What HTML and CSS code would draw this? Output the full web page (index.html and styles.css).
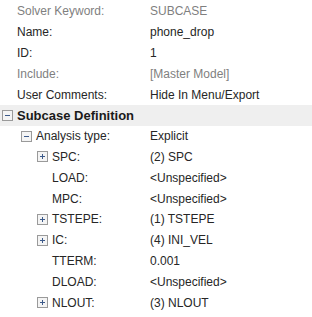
FILE: index.html
```html
<!DOCTYPE html>
<html lang="en">
<head>
  <meta charset="UTF-8">
  <title>Subcase Properties</title>
  <link rel="stylesheet" href="styles.css">
</head>
<body>
  <div class="prop-tree">
    <div class="row">
      <div class="label lvl-0 muted"><span class="toggle blank"></span>Solver Keyword:</div>
      <div class="value muted">SUBCASE</div>
    </div>
    <div class="row">
      <div class="label lvl-0"><span class="toggle blank"></span>Name:</div>
      <div class="value">phone_drop</div>
    </div>
    <div class="row">
      <div class="label lvl-0"><span class="toggle blank"></span>ID:</div>
      <div class="value">1</div>
    </div>
    <div class="row">
      <div class="label lvl-0 muted"><span class="toggle blank"></span>Include:</div>
      <div class="value muted">[Master Model]</div>
    </div>
    <div class="row">
      <div class="label lvl-0"><span class="toggle blank"></span>User Comments:</div>
      <div class="value">Hide In Menu/Export</div>
    </div>

    <div class="row group">
      <div class="label lvl-0 heading">
        <svg class="toggle" viewBox="0 0 11 11"><rect x="0.5" y="0.5" width="10" height="10" fill="#f4f4f4" stroke="#9a9a9a"/><path d="M3 5.5h5" stroke="#3c5a8a"/></svg>Subcase Definition
      </div>
    </div>
    <div class="row">
      <div class="label lvl-1">
        <svg class="toggle" viewBox="0 0 11 11"><rect x="0.5" y="0.5" width="10" height="10" fill="#f4f4f4" stroke="#9a9a9a"/><path d="M3 5.5h5" stroke="#3c5a8a"/></svg>Analysis type:
      </div>
      <div class="value">Explicit</div>
    </div>
    <div class="row">
      <div class="label lvl-2">
        <svg class="toggle" viewBox="0 0 11 11"><rect x="0.5" y="0.5" width="10" height="10" fill="#f4f4f4" stroke="#9a9a9a"/><path d="M3 5.5h5M5.5 3v5" stroke="#3c5a8a"/></svg>SPC:
      </div>
      <div class="value">(2) SPC</div>
    </div>
    <div class="row">
      <div class="label lvl-2"><span class="toggle blank"></span>LOAD:</div>
      <div class="value">&lt;Unspecified&gt;</div>
    </div>
    <div class="row">
      <div class="label lvl-2"><span class="toggle blank"></span>MPC:</div>
      <div class="value">&lt;Unspecified&gt;</div>
    </div>
    <div class="row">
      <div class="label lvl-2">
        <svg class="toggle" viewBox="0 0 11 11"><rect x="0.5" y="0.5" width="10" height="10" fill="#f4f4f4" stroke="#9a9a9a"/><path d="M3 5.5h5M5.5 3v5" stroke="#3c5a8a"/></svg>TSTEPE:
      </div>
      <div class="value">(1) TSTEPE</div>
    </div>
    <div class="row">
      <div class="label lvl-2">
        <svg class="toggle" viewBox="0 0 11 11"><rect x="0.5" y="0.5" width="10" height="10" fill="#f4f4f4" stroke="#9a9a9a"/><path d="M3 5.5h5M5.5 3v5" stroke="#3c5a8a"/></svg>IC:
      </div>
      <div class="value">(4) INI_VEL</div>
    </div>
    <div class="row">
      <div class="label lvl-2"><span class="toggle blank"></span>TTERM:</div>
      <div class="value">0.001</div>
    </div>
    <div class="row">
      <div class="label lvl-2"><span class="toggle blank"></span>DLOAD:</div>
      <div class="value">&lt;Unspecified&gt;</div>
    </div>
    <div class="row">
      <div class="label lvl-2">
        <svg class="toggle" viewBox="0 0 11 11"><rect x="0.5" y="0.5" width="10" height="10" fill="#f4f4f4" stroke="#9a9a9a"/><path d="M3 5.5h5M5.5 3v5" stroke="#3c5a8a"/></svg>NLOUT:
      </div>
      <div class="value">(3) NLOUT</div>
    </div>
  </div>
</body>
</html>
```

FILE: styles.css
```css
* {
  margin: 0;
  padding: 0;
  box-sizing: border-box;
}

body {
  background-color: #ffffff;
  color: #262626;
  font-family: 'Liberation Sans', Arial, sans-serif;
  font-size: 12px;
  overflow: hidden;
}

.prop-tree {
  display: flex;
  flex-direction: column;
  width: 312px;
  padding-top: 1px;
}

.row {
  display: flex;
  align-items: center;
  height: 20.8px;
  white-space: nowrap;
}

.row.group {
  background-color: #efefef;
}

.label {
  width: 150px;
  display: flex;
  align-items: center;
}

.lvl-0 {
  padding-left: 2px;
}

.lvl-1 {
  padding-left: 21px;
}

.lvl-2 {
  padding-left: 37px;
}

.heading {
  font-size: 13px;
  font-weight: bold;
  color: #1a1a1a;
}

.toggle {
  width: 11px;
  height: 11px;
  margin-right: 4px;
  flex-shrink: 0;
}

.toggle.blank {
  display: inline-block;
}

.value {
  flex-grow: 1;
}

.muted {
  color: #7f7f7f;
}
```
